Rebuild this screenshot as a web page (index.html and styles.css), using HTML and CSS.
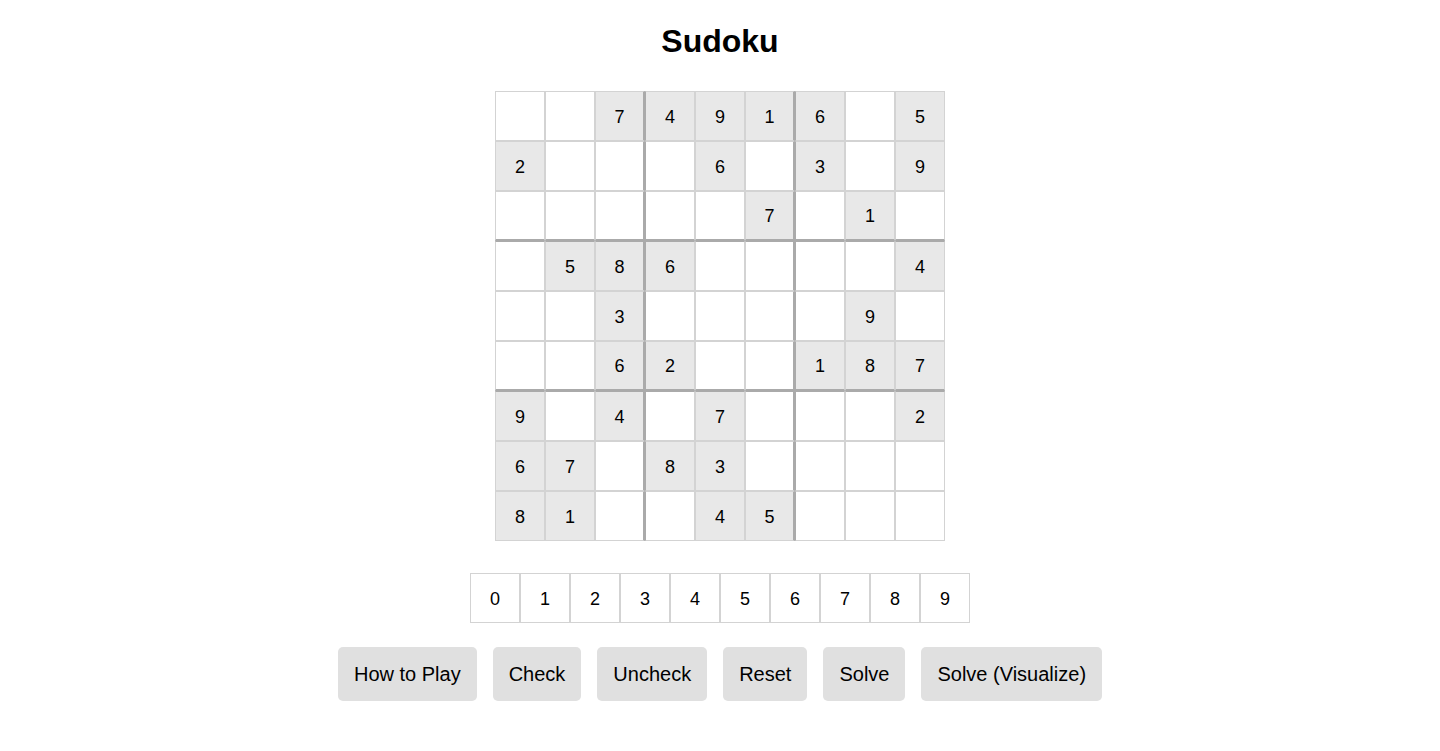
FILE: index.html
```html
<!DOCTYPE html>
<html>
<head>
<meta charset="utf-8">
<title>Sudoku</title>
<link rel="stylesheet" href="styles.css">
</head>
<body>
<main class="app">
  <h1 class="title">Sudoku</h1>
  <div class="board" id="board"></div>
  <div class="palette">
    <div class="pick">0</div><div class="pick">1</div><div class="pick">2</div><div class="pick">3</div><div class="pick">4</div><div class="pick">5</div><div class="pick">6</div><div class="pick">7</div><div class="pick">8</div><div class="pick">9</div>
  </div>
  <div class="actions">
    <button class="btn">How to Play</button>
    <button class="btn">Check</button>
    <button class="btn">Uncheck</button>
    <button class="btn">Reset</button>
    <button class="btn">Solve</button>
    <button class="btn">Solve (Visualize)</button>
  </div>
</main>
<script src="app.js"></script>
</body>
</html>
```
FILE: app.js
```js
const puzzle = [
  "..74916.5",
  "2...6.3.9",
  ".....7.1.",
  ".586....4",
  "..3....9.",
  "..62..187",
  "9.4.7...2",
  "67.83....",
  "81..45..."
];
const board = document.getElementById("board");
puzzle.forEach((row, r) => {
  [...row].forEach((ch, c) => {
    const cell = document.createElement("div");
    cell.className = "cell";
    if (ch !== ".") { cell.classList.add("given"); cell.textContent = ch; }
    if (c === 2 || c === 5) cell.classList.add("br");
    if (c === 3 || c === 6) cell.classList.add("bl");
    if (r === 2 || r === 5) cell.classList.add("bb");
    if (r === 3 || r === 6) cell.classList.add("bt");
    board.appendChild(cell);
  });
});
```
FILE: styles.css
```css
html, body {
  margin: 0;
  padding: 0;
  background: #fff;
}
body {
  font-family: "Liberation Sans", Arial, Helvetica, sans-serif;
  color: #000;
}
.app {
  display: flex;
  flex-direction: column;
  align-items: center;
  padding-top: 23px;
}
.title {
  margin: 0 0 32px;
  font-size: 32px;
  line-height: 36px;
  font-weight: bold;
}
.board {
  display: grid;
  grid-template-columns: repeat(9, 50px);
  grid-template-rows: repeat(9, 50px);
}
.cell {
  box-sizing: border-box;
  border: 1px solid #d3d3d3;
  display: flex;
  align-items: center;
  justify-content: center;
  padding-top: 2px;
  font-size: 18px;
  background: #fff;
}
.cell.given {
  background: #e8e8e8;
}
.cell.br { border-right: 2px solid #aaa; }
.cell.bl { border-left: 1px solid #aaa; }
.cell.bb { border-bottom: 2px solid #aaa; }
.cell.bt { border-top: 1px solid #aaa; }
.palette {
  display: flex;
  margin-top: 32px;
}
.pick {
  box-sizing: border-box;
  width: 50px;
  height: 50px;
  border: 1px solid #d3d3d3;
  display: flex;
  align-items: center;
  justify-content: center;
  padding-top: 2px;
  font-size: 18px;
}
.actions {
  display: flex;
  gap: 16px;
  margin-top: 24px;
}
.btn {
  font-family: "Liberation Sans", Arial, Helvetica, sans-serif;
  font-size: 20px;
  line-height: 23px;
  padding: 16px 16px 15px;
  border: none;
  border-radius: 5px;
  background: #e0e0e0;
  color: #000;
}
```
